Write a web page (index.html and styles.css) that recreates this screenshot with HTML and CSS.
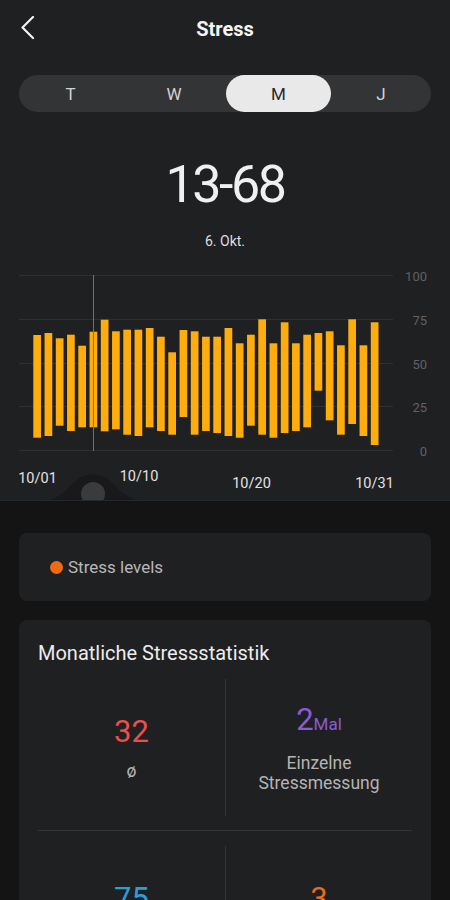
FILE: index.html
```html
<!DOCTYPE html>
<html lang="de">
<head>
<meta charset="utf-8">
<title>Stress</title>
<link rel="stylesheet" href="styles.css">
</head>
<body>
<section class="hero">
  <header class="topbar">
    <svg class="back" width="16" height="24" viewBox="0 0 16 24"><path d="M13 1 L2.5 11.5 L13 22" fill="none" stroke="#f2f2f2" stroke-width="2.2" stroke-linecap="round" stroke-linejoin="round"/></svg>
    <h1 class="title">Stress</h1>
  </header>
  <div class="seg">
    <span class="seg-item">T</span>
    <span class="seg-item">W</span>
    <span class="seg-item active">M</span>
    <span class="seg-item">J</span>
  </div>
  <div class="big">13-68</div>
  <div class="date">6. Okt.</div>
  <svg class="chart" width="450" height="249" viewBox="0 251 450 249">
    <g class="grid" stroke="#2f3033" stroke-width="1">
      <line x1="19" y1="275.5" x2="393" y2="275.5"/>
      <line x1="19" y1="319.5" x2="393" y2="319.5"/>
      <line x1="19" y1="363.5" x2="393" y2="363.5"/>
      <line x1="19" y1="406.5" x2="393" y2="406.5"/>
      <line x1="19" y1="450.5" x2="393" y2="450.5"/>
    </g>
    <g class="ylab" fill="#606164" font-size="13" text-anchor="end">
      <text x="427" y="281">100</text>
      <text x="427" y="325">75</text>
      <text x="427" y="369">50</text>
      <text x="427" y="412">25</text>
      <text x="427" y="456">0</text>
    </g>
    <g fill="#ffad0d">
      <rect x="33.3" y="335" width="7.7" height="102.7"/>
      <rect x="44.55" y="333" width="7.7" height="103"/>
      <rect x="55.8" y="338.3" width="7.7" height="87.4"/>
      <rect x="67.05" y="334.7" width="7.7" height="96.3"/>
      <rect x="78.3" y="345.7" width="7.7" height="81.6"/>
      <rect x="89.55" y="331.7" width="7.7" height="95.6"/>
      <rect x="100.8" y="319.7" width="7.7" height="111.6"/>
      <rect x="112.05" y="331.3" width="7.7" height="98"/>
      <rect x="123.3" y="329.7" width="7.7" height="105"/>
      <rect x="134.55" y="329.7" width="7.7" height="106.3"/>
      <rect x="145.8" y="328" width="7.7" height="99.3"/>
      <rect x="157.05" y="336.7" width="7.7" height="94.3"/>
      <rect x="168.3" y="352.3" width="7.7" height="82.4"/>
      <rect x="179.55" y="330" width="7.7" height="87"/>
      <rect x="190.8" y="331.3" width="7.7" height="103.4"/>
      <rect x="202.05" y="336.7" width="7.7" height="94.3"/>
      <rect x="213.3" y="336.7" width="7.7" height="96.3"/>
      <rect x="224.55" y="328" width="7.7" height="108"/>
      <rect x="235.8" y="343.3" width="7.7" height="94.4"/>
      <rect x="247.05" y="334.7" width="7.7" height="91"/>
      <rect x="258.3" y="319.3" width="7.7" height="115.4"/>
      <rect x="269.55" y="343.3" width="7.7" height="94.4"/>
      <rect x="280.8" y="322.3" width="7.7" height="110.7"/>
      <rect x="292.05" y="343.3" width="7.7" height="87.7"/>
      <rect x="303.3" y="334.7" width="7.7" height="92.6"/>
      <rect x="314.55" y="333" width="7.7" height="57.7"/>
      <rect x="325.8" y="331.3" width="7.7" height="89"/>
      <rect x="337.05" y="345.3" width="7.7" height="89.4"/>
      <rect x="348.3" y="319.3" width="7.7" height="104.7"/>
      <rect x="359.55" y="345.3" width="7.7" height="90.7"/>
      <rect x="370.8" y="322.3" width="7.7" height="122.7"/>
    </g>
    <line x1="93.5" y1="275" x2="93.5" y2="451" stroke="#707174" stroke-width="1"/>
    <g class="xlab" fill="#e2e2e2" font-size="14.5" text-anchor="middle">
      <text x="37.5" y="483">10/01</text>
      <text x="139" y="481">10/10</text>
      <text x="251.5" y="488">10/20</text>
      <text x="374.5" y="488">10/31</text>
    </g>
    <path d="M44 500 C 68 500, 70 474.5, 93 474.5 C 116 474.5, 118 500, 142 500 Z" fill="#19191b"/>
    <circle cx="93" cy="494" r="12" fill="#3a3b3d"/>
  </svg>
</section>

<div class="card legend">
  <span class="dot"></span>
  <span class="legend-text">Stress levels</span>
</div>

<div class="card stats">
  <h2 class="stats-title">Monatliche Stressstatistik</h2>
  <div class="stat-row">
    <div class="stat">
      <div class="num red">32</div>
      <div class="lab">ø</div>
    </div>
    <div class="stat">
      <div class="num purple">2<span class="unit">Mal</span></div>
      <div class="lab">Einzelne<br>Stressmessung</div>
    </div>
  </div>
  <div class="rule"></div>
  <div class="stat-row">
    <div class="stat">
      <div class="num blue">75</div>
      <div class="lab">Max.</div>
    </div>
    <div class="stat">
      <div class="num orange">3</div>
      <div class="lab">Hoher Stress</div>
    </div>
  </div>
</div>
</body>
</html>
```

FILE: styles.css
```css
* { box-sizing: border-box; }

html, body {
  margin: 0;
  padding: 0;
  background: #141414;
  font-family: Roboto, "Noto Sans", "DejaVu Sans", sans-serif;
  color: #e6e6e6;
}

body {
  width: 450px;
  padding-bottom: 40px;
}

.hero {
  background: #1f2022;
  border-bottom: 1px solid #23282c;
  display: flex;
  flex-direction: column;
}

.topbar {
  position: relative;
  height: 58px;
  display: flex;
  align-items: center;
  justify-content: center;
}

.back {
  position: absolute;
  left: 20px;
  top: 16px;
}

.title {
  margin: 0;
  font-size: 20px;
  font-weight: 700;
  color: #f4f4f4;
  line-height: 58px;
}

.seg {
  margin: 17px 19px 0;
  height: 37px;
  border-radius: 19px;
  background: #333436;
  display: grid;
  grid-template-columns: 103px 104px 105px 1fr;
  align-items: stretch;
}

.seg-item {
  display: flex;
  align-items: center;
  justify-content: center;
  font-size: 17px;
  color: #d2d2d2;
  border-radius: 19px;
}

.seg-item.active {
  background: #e9e9e9;
  color: #2a2a2a;
}

.big {
  margin-top: 42px;
  text-align: center;
  font-size: 52px;
  line-height: 62px;
  letter-spacing: -2.5px;
  color: #f0f0f0;
}

.date {
  margin-top: 15px;
  text-align: center;
  font-size: 14px;
  line-height: 20px;
  color: #dedede;
}

.chart {
  display: block;
  font-family: Roboto, "Noto Sans", sans-serif;
}

.card {
  background: #1f2022;
  border-radius: 8px;
  margin: 0 19px;
}

.legend {
  margin-top: 32px;
  height: 68px;
  display: flex;
  align-items: center;
  padding-left: 31px;
  gap: 5px;
}

.dot {
  width: 13px;
  height: 13px;
  border-radius: 50%;
  background: #f06a12;
}

.legend-text {
  font-size: 17px;
  color: #b8b8b8;
}

.stats {
  margin-top: 19px;
  padding: 20px 19px 20px;
}

.stats-title {
  margin: 0;
  font-size: 20px;
  font-weight: 400;
  line-height: 26px;
  color: #ececec;
}

.stat-row {
  margin-top: 13px;
  height: 137px;
  display: grid;
  grid-template-columns: 1fr 1fr;
}

.rule + .stat-row {
  margin-top: 15px;
}

.rule {
  margin-top: 14px;
  height: 1px;
  background: #333437;
}

.stat {
  display: flex;
  flex-direction: column;
  align-items: center;
  justify-content: center;
  gap: 11px;
}

.stat + .stat {
  border-left: 1px solid #333437;
}

.num {
  font-size: 31px;
  line-height: 36px;
}

.unit {
  font-size: 17px;
}

.red { color: #ec4e4c; }
.purple { color: #8b5ad8; }
.blue { color: #2a9ed8; }
.orange { color: #ec6a1c; }

.lab {
  font-size: 17.5px;
  line-height: 20px;
  color: #b4b4b4;
  text-align: center;
}
```
